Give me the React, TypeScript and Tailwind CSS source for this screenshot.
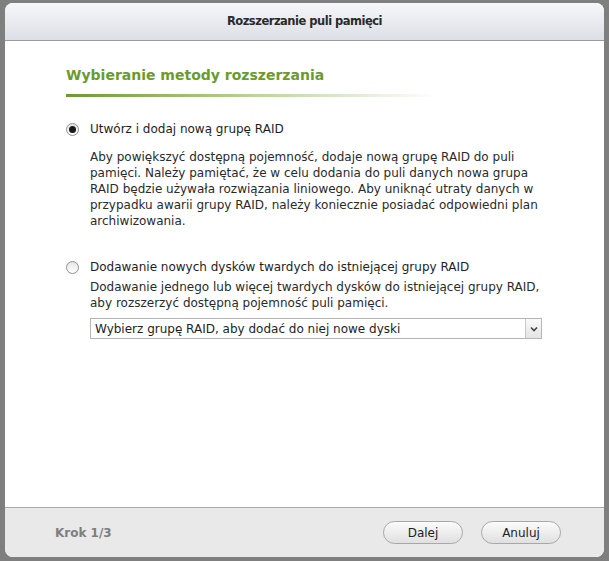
import { useState } from "react";

const font = { fontFamily: '"DejaVu Sans", Verdana, sans-serif' };

function Radio({ checked, onClick }: { checked: boolean; onClick: () => void }) {
  return (
    <button
      onClick={onClick}
      className="w-[13px] h-[13px] rounded-full border border-[#8f8f8f] bg-gradient-to-b from-[#e6e6e6] to-white flex items-center justify-center shrink-0"
    >
      {checked && <span className="w-[7px] h-[7px] rounded-full bg-[#1a1a1a]" />}
    </button>
  );
}

export default function App() {
  const [method, setMethod] = useState<"new" | "existing">("new");

  return (
    <div
      className="w-[609px] h-[561px] bg-[#7f7f7f] pt-[3px] pl-[5px] pr-[5px] pb-[4px] flex"
      style={font}
    >
      <div className="flex-1 flex flex-col rounded-[8px] bg-white overflow-hidden">
        {/* naglowek okna */}
        <div className="h-[38px] shrink-0 bg-gradient-to-b from-[#f6f7f9] to-[#dcdfe6] border-b border-[#9b9b9b] flex items-center justify-center">
          <span className="text-[11.5px] font-bold text-[#2a2a2a] tracking-[-0.5px]">Rozszerzanie puli pamięci</span>
        </div>

        {/* tresc */}
        <div className="flex-1 pl-[61px] pt-[24px]">
          <h1 className="text-[14px] font-bold text-[#6b9b2c] leading-[20px]">
            Wybieranie metody rozszerzania
          </h1>
          <div className="mt-[9px] h-[3px] w-[370px] bg-gradient-to-r from-[#6a9a30] via-[#b9d397] to-transparent" />

          <div className="mt-[24px]">
            <div className="flex items-center h-[16px]">
              <div className="w-[24px] flex justify-start">
                <Radio checked={method === "new"} onClick={() => setMethod("new")} />
              </div>
              <span className="text-[12px] text-[#1e1e1e]">Utwórz i dodaj nową grupę RAID</span>
            </div>
            <p className="ml-[24px] mt-[12px] text-[12px] leading-[16px] text-[#2a2a2a]">
              Aby powiększyć dostępną pojemność, dodaje nową grupę RAID do puli
              <br />
              pamięci. Należy pamiętać, że w celu dodania do puli danych nowa grupa
              <br />
              RAID będzie używała rozwiązania liniowego. Aby uniknąć utraty danych w
              <br />
              przypadku awarii grupy RAID, należy koniecznie posiadać odpowiedni plan
              <br />
              archiwizowania.
            </p>
          </div>

          <div className="mt-[30px]">
            <div className="flex items-center h-[16px]">
              <div className="w-[24px] flex justify-start">
                <Radio checked={method === "existing"} onClick={() => setMethod("existing")} />
              </div>
              <span className="text-[12px] text-[#1e1e1e]">
                Dodawanie nowych dysków twardych do istniejącej grupy RAID
              </span>
            </div>
            <p className="ml-[24px] mt-[4px] text-[12px] leading-[16px] text-[#2a2a2a]">
              Dodawanie jednego lub więcej twardych dysków do istniejącej grupy RAID,
              <br />
              aby rozszerzyć dostępną pojemność puli pamięci.
            </p>
            <div className="ml-[24px] mt-[7px] w-[452px] h-[21px] border border-[#b5b5b5] flex items-center bg-white">
              <span className="flex-1 pl-[4px] text-[12px] text-[#1e1e1e]">
                Wybierz grupę RAID, aby dodać do niej nowe dyski
              </span>
              <div className="w-[16px] h-[19px] border-l border-[#c8c8c8] bg-gradient-to-b from-[#fafafa] to-[#e4e4e4] flex items-center justify-center">
                <svg width="8" height="6" viewBox="0 0 8 6">
                  <path d="M1 1.5 L4 4.5 L7 1.5" stroke="#444" strokeWidth="1.6" fill="none" />
                </svg>
              </div>
            </div>
          </div>
        </div>

        {/* stopka */}
        <div className="h-[50px] shrink-0 bg-[#e9e9e9] border-t border-[#a9a9a9] flex items-center pl-[50px] pr-[43px]">
          <span className="text-[12px] font-bold text-[#7e7e7e] flex-1">Krok 1/3</span>
          <div className="flex gap-[18px]">
            <button className="w-[80px] h-[23px] rounded-full border border-[#a8a8a8] bg-gradient-to-b from-[#fbfbfb] to-[#e0e0e0] text-[12px] text-[#222]">
              Dalej
            </button>
            <button className="w-[80px] h-[23px] rounded-full border border-[#a8a8a8] bg-gradient-to-b from-[#fbfbfb] to-[#e0e0e0] text-[12px] text-[#222]">
              Anuluj
            </button>
          </div>
        </div>
      </div>
    </div>
  );
}
